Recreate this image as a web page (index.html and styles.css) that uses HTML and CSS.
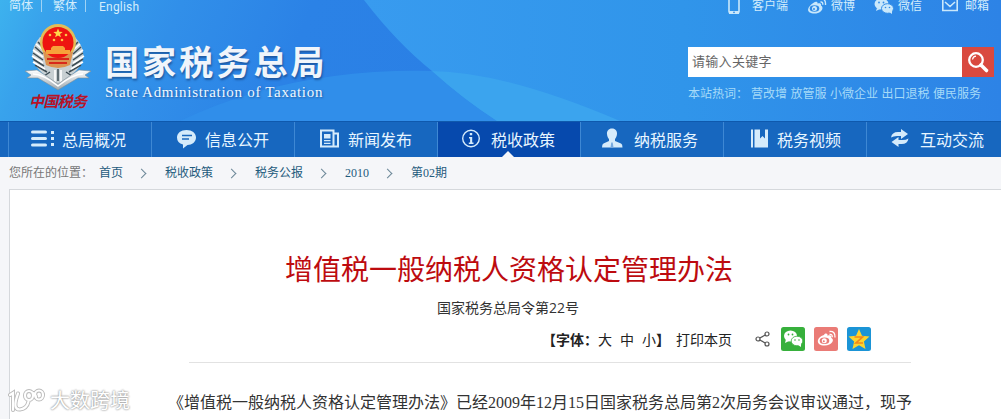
FILE: index.html
```html
<!DOCTYPE html>
<html lang="zh-CN">
<head>
    <meta charset="UTF-8">
    <title>国家税务总局</title>
    <link rel="stylesheet" href="styles.css">
</head>
<body>

    <div class="header">
        <svg class="header-bg" width="1001" height="121" viewBox="0 0 1001 121">
            <defs>
                <linearGradient id="dark" x1="0" y1="0" x2="1" y2="0.1">
                    <stop offset="0" stop-color="#3db2ee"/>
                    <stop offset="0.1" stop-color="#38a2ec"/>
                    <stop offset="0.35" stop-color="#318fe9"/>
                    <stop offset="0.6" stop-color="#2b82e6"/>
                    <stop offset="1" stop-color="#2a7fe5"/>
                </linearGradient>
                <linearGradient id="light" x1="0" y1="0" x2="1" y2="0">
                    <stop offset="0" stop-color="#389bef"/>
                    <stop offset="0.5" stop-color="#3095ea"/>
                    <stop offset="1" stop-color="#2d83e6"/>
                </linearGradient>
            </defs>
            <rect width="520" height="121" fill="url(#dark)"/>
            <path d="M180 121Q290 68 432 71Q463 99 497 121Z" fill="#308eea"/>
            <path d="M364 0Q397 43 432 71Q463 99 497 121H1001V0Z" fill="url(#light)"/>
            <path d="M432 71Q505 72 620 121H497Q463 99 432 71Z" fill="#3ba4ee"/>
        </svg>

        <div class="topbar">
            <div class="langs">
                <a>简体</a><i></i><a>繁体</a><i></i><a class="en">English</a>
            </div>
            <div class="links">
                <a class="l-app"><svg width="14" height="16" viewBox="0 0 14 16"><rect x="2" y="-4" width="10" height="17" rx="1.5" fill="none" stroke="#c9e8fb" stroke-width="1.6"/><path d="M2 11h10v3H2z" fill="#c9e8fb"/><circle cx="7" cy="12.3" r="0.9" fill="#318ce7"/></svg>客户端</a>
                <a class="l-weibo"><svg width="20" height="16" viewBox="0 0 20 16"><path d="M7 2.500c1.500-1.500 4-1 3.500 1 3-.8 4 .5 3.500 2 3.500 2 .5 8-6.500 8C-1.500 13.500-.5 7 7 2.500z" fill="#c9e8fb"/><ellipse cx="7.500" cy="8.500" rx="4.800" ry="3.300" fill="#318ce7"/><circle cx="7.500" cy="8.500" r="2.500" fill="#c9e8fb"/><circle cx="7" cy="9" r="1" fill="#318ce7"/><path d="M13.500 2q2.500-.4 2.300 2.800M14-1q5-.5 4.500 6" fill="none" stroke="#c9e8fb" stroke-width="1.400"/></svg>微博</a>
                <a class="l-wechat"><svg width="20" height="16" viewBox="0 0 20 16"><ellipse cx="7.500" cy="4" rx="7" ry="5.500" fill="#c9e8fb"/><path d="M3 8l-1 3 4-2z" fill="#c9e8fb"/><ellipse cx="13.500" cy="8.500" rx="6" ry="4.800" fill="#c9e8fb" stroke="#318ce7" stroke-width="1"/><path d="M15 12l3 2v-4z" fill="#c9e8fb"/><g fill="#318ce7"><circle cx="5" cy="2.500" r="0.900"/><circle cx="9.500" cy="2.500" r="0.900"/><circle cx="11.500" cy="7.500" r="0.800"/><circle cx="15.500" cy="7.500" r="0.800"/></g></svg>微信</a>
                <a class="l-mail"><svg width="18" height="16" viewBox="0 0 18 16"><path d="M1.800-2h14.400v12.500H1.800zM4 2l5 4.500L14 2" fill="none" stroke="#c9e8fb" stroke-width="1.600"/></svg>邮箱</a>
            </div>
        </div>

        <div class="banner">
            <div class="emblem">
                <svg width="66" height="68" viewBox="0 0 66 68">
                    <defs>
                        <linearGradient id="silver" x1="0" y1="0" x2="0" y2="1">
                            <stop offset="0" stop-color="#fff"/>
                            <stop offset="1" stop-color="#9da8b0"/>
                        </linearGradient>
                    </defs>
                    <path d="M15 13Q0 31 15 47L33 62L51 47Q66 31 50 13" fill="#c8d0d3"/>
                    <g fill="none" stroke="#3c4c54" stroke-width="1.500">
                        <path d="M13 18l6 6M10 23l8 7M8 29l10 7M8 35l11 7M10 41l12 7M53 18l-6 6M56 23l-8 7M58 29l-10 7M58 35l-11 7M56 41l-12 7M25 48l-6 4M41 48l6 4M33 45v12"/>
                    </g>
                    <g fill="none" stroke="#fff" stroke-width="1.600">
                        <path d="M11 20l7 6M8 26l10 7M7 32l11 7M8 38l12 7M55 20l-7 6M58 26l-10 7M59 32l-11 7M58 38l-12 7M30 46v12M36 46v12"/>
                    </g>
                    <path d="M0 47l12-1 8 5 13 9 13-9 8-5 12 1-6 4 4 3H53L33 66 13 54H2l4-3z" fill="url(#silver)" stroke="#7d8d95" stroke-width="0.600"/>
                    <path d="M8 50q10 0 25 12 15-12 25-12" fill="none" stroke="#fff" stroke-width="1.500"/>
                    <circle cx="33" cy="18" r="18" fill="#e3bd56"/>
                    <path d="M18 28h30l-3 13q-12 6-24 0z" fill="#dc9350"/>
                    <circle cx="33" cy="18.500" r="15.500" fill="#ee1410"/>
                    <path d="M33 4.500l1.300 3.200 3.400.2-2.700 2.100.9 3.300-2.900-1.800-2.900 1.800.9-3.300-2.700-2.100 3.400-.2z" fill="#ffd84a"/>
                    <g fill="#ffc545"><circle cx="25" cy="11" r="1.300"/><circle cx="41" cy="11" r="1.300"/><circle cx="29" cy="16" r="1.300"/><circle cx="37" cy="16" r="1.300"/></g>
                    <path d="M28 22h10l2 2v2h5v4H21v-4h5v-2z" fill="#f7a13a"/>
                    <path d="M22 35h22M24 39h18" stroke="#d8281a" stroke-width="2"/>
                </svg>
                <div class="emblem-text">中国税务</div>
            </div>
            <div class="site-name">
                <div class="cn">国家税务总局</div>
                <div class="sub">State Administration of Taxation</div>
            </div>
            <div class="search">
                <div class="search-box">
                    <div class="search-input">请输入关键字</div>
                    <div class="search-btn">
                        <svg width="32" height="30" viewBox="0 0 32 30"><circle cx="14" cy="13" r="6.800" fill="none" stroke="#fff" stroke-width="2.300"/><path d="M10.500 12.500q.5-3 3.500-3.300" fill="none" stroke="#fff" stroke-width="1.200"/><path d="M19 18l5.500 5.500" stroke="#fff" stroke-width="3.600" stroke-linecap="round"/></svg>
                    </div>
                </div>
                <div class="hot"><span class="hot-label">本站热词：</span><a>营改增</a><a>放管服</a><a>小微企业</a><a>出口退税</a><a>便民服务</a></div>
            </div>
        </div>
    </div>

    <div class="nav">
        <a class="nav-item"><svg width="24" height="20" viewBox="0 0 24 20"><path d="M1.500 3h13M1.500 9.500h13M1.500 16h13" stroke="#d5ebfb" stroke-width="3" stroke-linecap="round"/><path d="M20 2h3v3h-3zM20 8h3v3h-3zM20 14h3v3h-3z" fill="#d5ebfb"/></svg>总局概况</a>
        <a class="nav-item"><svg width="24" height="20" viewBox="0 0 24 20"><path d="M12.500 1C18 1 22 4 22 8.500S18 16 13.500 16L9 19.500v-4C5 14.500 3 12 3 8.500 3 4 7 1 12.500 1z" fill="#d5ebfb"/><path d="M8 6.500h10M8 10h7" stroke="#1a68bd" stroke-width="1.500"/></svg>信息公开</a>
        <a class="nav-item"><svg width="24" height="20" viewBox="0 0 24 20"><path d="M4 1.500h12.500v16H4zM16.500 4.500H21v13h-5" fill="none" stroke="#d5ebfb" stroke-width="2"/><path d="M7 5h6.500v4.500H7zM7 11h6.500v1.300H7zM7 13.700h6.500V15H7z" fill="#d5ebfb"/></svg>新闻发布</a>
        <a class="nav-item current"><svg width="24" height="20" viewBox="0 0 24 20"><circle cx="11" cy="9.500" r="8.300" fill="none" stroke="#d5ebfb" stroke-width="1.400"/><path d="M9.800 4h2.400v2.200H9.800zM9 8h3.200v5.500h1.300V15H8.800v-1.500h1.300V9.500H9z" fill="#d5ebfb"/></svg>税收政策</a>
        <a class="nav-item"><svg width="24" height="20" viewBox="0 0 24 20"><path d="M9-.5c3.500 0 5.300 2.500 5 5.500-.2 2.500-1.200 4-2 5v2l6 2.500q1.500.7 1.500 4H-1q0-3.300 1.500-4L6 12v-2C5 9 4.200 7.500 4 5c-.3-3 1.500-5.500 5-5.500z" fill="#d5ebfb"/><path d="M8.300 13.500h1.400l.8 5H7.500z" fill="#76a9df"/></svg>纳税服务</a>
        <a class="nav-item"><svg width="24" height="20" viewBox="0 0 24 20"><path d="M5 .5h2v18H5zM8.500.5H14v9l2.500-2.500 2.500 2.500v-9h3v18H8.500z" fill="#d5ebfb"/></svg>税务视频</a>
        <a class="nav-item"><svg width="24" height="20" viewBox="0 0 24 20"><path d="M2 8.500q1-6 8-5.500h2V0l7 5-7 5V7h-2Q5 6.500 2 8.500zM19.500 9.500q-1 6-8 5.500H9.500v3l-7-5 7-5v3h2q5 .5 8-1.500z" fill="#d5ebfb"/></svg>互动交流</a>
    </div>

    <div class="crumbs">
        <span class="label">您所在的位置：</span>
        <a>首页</a><b></b><a>税收政策</a><b></b><a>税务公报</a><b></b><a>2010</a><b></b><a>第02期</a>
    </div>

    <div class="content">
        <h1>增值税一般纳税人资格认定管理办法</h1>
        <div class="doc-no">国家税务总局令第22号</div>
        <div class="tools">
            <span class="strong">【字体：</span><a>大</a><a>中</a><a>小</a><span class="strong">】</span>
            <a class="print">打印本页</a>
            <svg class="share" width="16" height="16" viewBox="0 0 16 16"><g fill="none" stroke="#555" stroke-width="1.200"><circle cx="3" cy="8" r="2"/><circle cx="12" cy="3" r="2"/><circle cx="12" cy="13" r="2"/><path d="M4.800 7l5.500-3M4.800 9l5.500 3"/></g></svg>
            <svg width="24" height="24" viewBox="0 0 24 24"><rect width="24" height="24" rx="2.500" fill="#37b03c"/><ellipse cx="9.500" cy="9" rx="6.500" ry="5.500" fill="#fff"/><path d="M5 12l-1 4 4-2z" fill="#fff"/><ellipse cx="16" cy="14" rx="5.800" ry="4.800" fill="#fff" stroke="#37b03c" stroke-width="0.800"/><path d="M17 18l3 2v-4z" fill="#fff"/><g fill="#37b03c"><circle cx="7.500" cy="7.500" r="0.900"/><circle cx="11.500" cy="7.500" r="0.900"/><circle cx="14" cy="13" r="0.800"/><circle cx="18" cy="13" r="0.800"/></g></svg>
            <svg width="24" height="24" viewBox="0 0 24 24"><rect width="24" height="24" rx="2.500" fill="#ea7b76"/><path d="M10 8c1-2 4-2 3.500.8 3-1.200 4.500 0 3.700 2 4 2 .8 7.700-6.500 7.700C1 18.500 2.500 10 10 8z" fill="#fff"/><ellipse cx="10.500" cy="13.800" rx="4.800" ry="3.200" fill="#ea7b76"/><circle cx="10.300" cy="13.800" r="2.500" fill="#fff"/><circle cx="9.800" cy="14.300" r="1" fill="#ea7b76"/><path d="M15.500 7.500q3-.6 2.800 2.800M15.500 4.500q6-.5 5.500 6" fill="none" stroke="#fff" stroke-width="1.300"/></svg>
            <svg width="24" height="24" viewBox="0 0 24 24"><rect width="24" height="24" rx="2.500" fill="#1b94d6"/><path d="M12 2l3 6.800 7.500.8-5.600 5 1.600 7.400-6.500-3.800L5.500 22l1.600-7.400-5.600-5L9 8.800z" fill="#fcd42c"/><path d="M7.500 10h8l-6.500 6h7" fill="none" stroke="#f0861c" stroke-width="1.700"/></svg>
        </div>
        <p class="text">《增值税一般纳税人资格认定管理办法》已经2009年12月15日国家税务总局第2次局务会议审议通过，现予</p>
    </div>

    <div class="watermark">
        <svg width="40" height="28" viewBox="0 0 40 28">
            <defs>
                <path id="logo" d="M2 8l3-2v17M10 6.500Q4 23 12 22.500q7-1 8.500-8M25 8.500a4 4.500 0 1 0-8 0 4 4.500 0 0 0 8 0zM25 6q3 1 3 5M35 8a4 4.500 0 1 0-8 0 4 4.500 0 0 0 8 0z"/>
            </defs>
            <g fill="none" stroke-linecap="round">
                <use href="#logo" stroke="#bbb" stroke-width="4"/>
                <use href="#logo" stroke="#fff" stroke-width="2.200"/>
            </g>
        </svg>
        <span>大数跨境</span>
    </div>

</body>
</html>
```
FILE: styles.css
```css
body {
    margin: 0;
    width: 1001px;
    height: 419px;
    overflow: hidden;
    position: relative;
    background-color: #f5f6f9;
    font-family: "Liberation Sans", "Noto Sans CJK SC", sans-serif;
    font-size: 12px;
    color: #333;
}
svg {
    display: block;
    flex: none;
}
.header {
    position: relative;
    height: 121px;
    overflow: hidden;
}
.header-bg {
    position: absolute;
    left: 0;
    top: 0;
}
.topbar {
    position: relative;
    display: flex;
    justify-content: space-between;
    height: 13px;
    line-height: 13px;
    color: #d3edfc;
}
.langs {
    display: flex;
    padding-left: 9px;
}
.langs i {
    width: 1px;
    height: 12px;
    margin: 0 11px 0 8px;
    background-color: #9fd3f5;
}
.langs .en {
    font-family: Roboto, sans-serif;
    font-size: 12px;
    line-height: 14px;
    letter-spacing: 0.2px;
    margin-left: 2px;
}
.links {
    display: flex;
    padding-right: 12px;
}
.links a {
    display: flex;
}
.l-app svg {
    margin-right: 11px;
}
.l-weibo {
    margin-left: 19px;
}
.l-weibo svg {
    margin-right: 4px;
}
.l-wechat {
    margin-left: 19px;
}
.l-wechat svg {
    margin-right: 4px;
}
.l-mail {
    margin-left: 19px;
}
.l-mail svg {
    margin-right: 6px;
}
.banner {
    position: relative;
    display: flex;
    height: 108px;
}
.emblem {
    width: 66px;
    padding: 11px 0 0 25px;
}
.emblem-text {
    margin: -1px 0 0 4px;
    font-family: "Noto Sans CJK SC", sans-serif;
    font-size: 15px;
    line-height: 20px;
    font-weight: bold;
    font-style: italic;
    letter-spacing: -0.7px;
    white-space: nowrap;
    color: #b81226;
}
.site-name {
    width: 583px;
    padding: 30px 0 0 14px;
    box-sizing: border-box;
}
.site-name .cn {
    font-size: 34px;
    line-height: 40px;
    font-weight: bold;
    letter-spacing: 3.1px;
    color: #f0f5fb;
    text-shadow: 1px 2px 2px rgba(20, 60, 120, 0.6);
}
.site-name .sub {
    font-family: "Liberation Serif", serif;
    font-size: 15px;
    line-height: 18px;
    letter-spacing: 0.7px;
    color: #f0f8ff;
    text-shadow: 1px 1px 2px rgba(20, 60, 120, 0.6);
}
.search {
    width: 306px;
    margin-left: 14px;
    padding-top: 34px;
}
.search-box {
    display: flex;
    height: 30px;
}
.search-input {
    width: 270px;
    padding-left: 4px;
    background-color: #fff;
    font-size: 13px;
    line-height: 29px;
    letter-spacing: 0.3px;
    color: #666;
}
.search-btn {
    width: 32px;
    background-color: #d9493f;
}
.hot {
    display: flex;
    margin-top: 8px;
    line-height: 18px;
    color: #a5daf8;
}
.hot-label {
    width: 63px;
}
.hot a {
    margin-right: 3.5px;
    white-space: nowrap;
}
.nav {
    display: flex;
    height: 36px;
    box-sizing: border-box;
    padding-left: 8px;
    border-top: 1px solid #0f59ad;
    background-color: #1767bf;
}
.nav-item {
    display: flex;
    align-items: center;
    position: relative;
    flex: none;
    width: 143px;
    height: 35px;
    box-sizing: border-box;
    padding: 0 0 1px 22px;
    border-left: 1px solid #3e88d4;
    font-size: 16px;
    color: #e8f6ff;
}
.nav-item svg {
    margin: 0 7px 0 0;
    overflow: visible;
}
.nav-item.current {
    background-color: #0649ad;
}
.nav-item.current::after {
    content: "";
    position: absolute;
    left: 64px;
    bottom: 0;
    border: 6px solid transparent;
    border-top: 0;
    border-bottom-color: #f5f6f9;
}
.crumbs {
    display: flex;
    align-items: baseline;
    height: 32px;
    padding-left: 9px;
    box-sizing: border-box;
    line-height: 32px;
    font-family: "Liberation Serif", "Noto Sans CJK SC", serif;
    color: #1f5b7d;
}
.crumbs .label {
    width: 90px;
    color: #777;
}
.crumbs b {
    align-self: center;
    width: 6px;
    height: 6px;
    margin: 0 20px 0 15px;
    border: solid #6b8797;
    border-width: 1px 1px 0 0;
    transform: rotate(45deg);
}
.content {
    height: 230px;
    margin-left: 9px;
    box-sizing: border-box;
    border: 1px solid #d5d8dc;
    border-width: 1px 0 0 1px;
    background-color: #fff;
}
.content h1 {
    margin: 0;
    padding: 60px 0 0 275px;
    font-size: 28px;
    line-height: 42px;
    font-weight: normal;
    color: #bd0b0f;
}
.doc-no {
    padding-left: 427px;
    margin-top: 5px;
    font-family: "Open Sans", "Noto Sans CJK SC", sans-serif;
    font-size: 14px;
    line-height: 22px;
}
.tools {
    display: flex;
    align-items: center;
    height: 24px;
    margin-top: 8px;
    padding-left: 532px;
    font-size: 14px;
    color: #222;
}
.tools a {
    margin-right: 8px;
}
.tools .strong {
    font-weight: bold;
}
.tools .strong + a + a + a {
    margin-right: 0;
}
.tools .print {
    margin: 0 22px 0 6px;
}
.tools svg + svg {
    margin-left: 9px;
}
.tools .share {
    margin: 0 1px 0 1px;
}
.text {
    width: 722px;
    margin: 11px 0 0 179px;
    padding: 27px 0 0;
    border-top: 1px solid #e2e2e2;
    font-family: "Liberation Serif", "Noto Sans CJK SC", serif;
    font-size: 16px;
    line-height: 26px;
    text-indent: -21px;
    white-space: nowrap;
}
.watermark {
    position: absolute;
    left: 8px;
    top: 386px;
    display: flex;
    align-items: center;
    font-size: 20px;
    line-height: 30px;
    color: #fff;
    text-shadow: 0 0 2px #999, 0 0 2px #999;
}
.watermark span {
    margin-left: 2px;
}
```
